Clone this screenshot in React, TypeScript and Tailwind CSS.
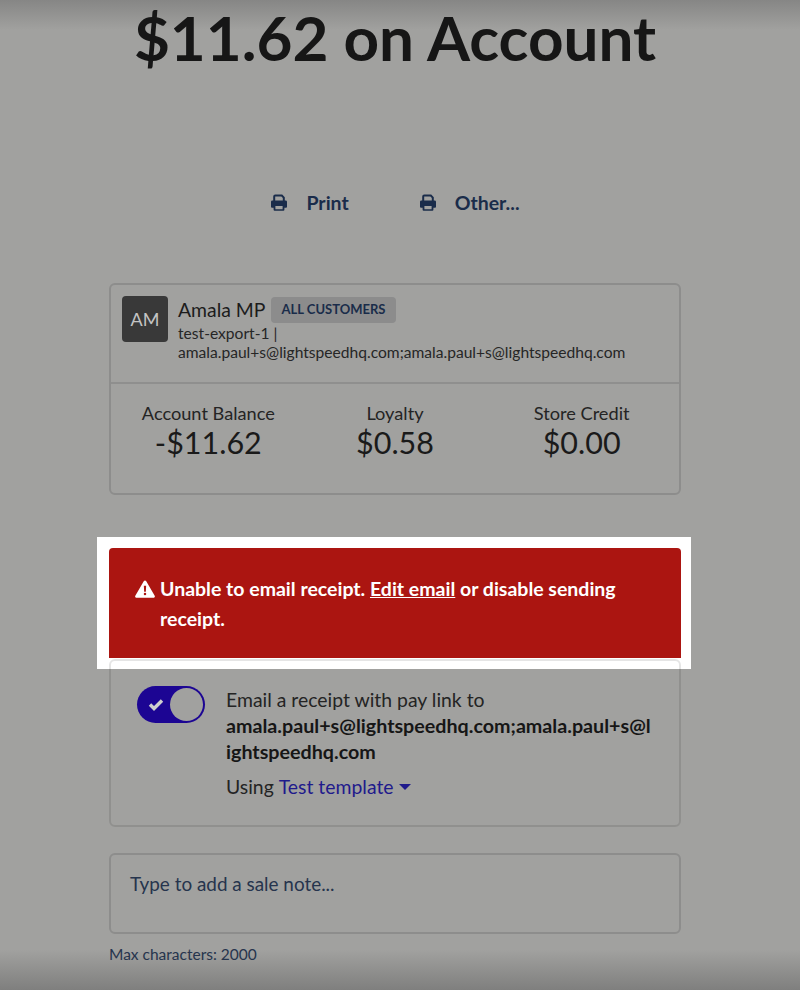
import React from 'react';

const PrinterIcon: React.FC = () => (
  <svg width="18" height="18" viewBox="0 0 18 18" fill="none" className="shrink-0">
    <path d="M4.2 7V2.6a1 1 0 0 1 1-1h6.6l2 2V7" stroke="#1a2c4a" strokeWidth="2" />
    <path fillRule="evenodd" clipRule="evenodd" d="M2.4 6.4h13.2a1.4 1.4 0 0 1 1.4 1.4v5a1 1 0 0 1-1 1h-1.6v2a1 1 0 0 1-1 1H4.6a1 1 0 0 1-1-1v-2H2a1 1 0 0 1-1-1v-5a1.4 1.4 0 0 1 1.4-1.4ZM5.4 12v3.2h7.2V12H5.4Z" fill="#1a2c4a" />
  </svg>
);

const WarningIcon: React.FC = () => (
  <svg width="20" height="18" viewBox="0 0 19 17" className="shrink-0">
    <path fillRule="evenodd" clipRule="evenodd" d="M9.5 0.5c.5 0 .9.3 1.2.7l8 13.7c.5.8-.1 1.8-1.1 1.8H1.4c-1 0-1.6-1-1.1-1.8l8-13.7c.3-.4.7-.7 1.2-.7ZM8.4 5.4l.3 5.6h1.6l.3-5.6H8.4Zm1.1 6.6a1.2 1.2 0 1 0 0 2.4 1.2 1.2 0 0 0 0-2.4Z" fill="#fff" />
  </svg>
);

const Stat: React.FC<{ label: string; value: string }> = ({ label, value }) => (
  <div className="flex flex-col items-center">
    <span className="text-[18.2px] leading-[21px] text-[#242424]">{label}</span>
    <span className="text-[30.5px] leading-[36px] text-[#1a1a1a]">{value}</span>
  </div>
);

export default function App() {
  return (
    <div className="w-[800px] h-[990px] overflow-hidden flex flex-col items-center pr-[10px] font-['Lato','Open_Sans',sans-serif] bg-[linear-gradient(to_bottom,#868685_0px,#a1a19f_30px,#a1a19f_950px,#7f7f7e_990px)]">
      <h1 className="mt-[1px] text-[62px] leading-[72px] font-bold text-[#161616] whitespace-nowrap">$11.62 on Account</h1>

      <div className="mt-[116px] flex gap-[70px] text-[19.5px] leading-[28px] font-bold text-[#1a2c4a]">
        <div className="flex items-center gap-[18px]">
          <PrinterIcon />
          <span>Print</span>
        </div>
        <div className="flex items-center gap-[18px]">
          <PrinterIcon />
          <span>Other...</span>
        </div>
      </div>

      <div className="mt-[66px] w-[572px] h-[212px] rounded-md border-2 border-[#8d8d8c] flex flex-col">
        <div className="h-[99px] border-b-2 border-[#8f8f8e] flex gap-[10px] pl-[11px] pt-[11px]">
          <div className="w-[46px] h-[46px] rounded bg-[#393939] flex items-center justify-center text-[18px] text-[#c4c4c4]">AM</div>
          <div className="flex flex-col">
            <div className="mt-[1px] flex items-center gap-[5px]">
              <span className="text-[19.4px] leading-[26px] text-[#1c1c1c]">Amala MP</span>
              <span className="h-[26px] px-[11px] rounded bg-[#8c8c8c] flex items-center text-[13px] font-bold text-[#1a2c4a]">ALL CUSTOMERS</span>
            </div>
            <span className="text-[15.6px] leading-[20px] text-[#262626]">test-export-1 |</span>
            <span className="text-[15.6px] leading-[19px] text-[#262626] whitespace-nowrap">amala.paul+s@lightspeedhq.com;amala.paul+s@lightspeedhq.com</span>
          </div>
        </div>
        <div className="grid grid-cols-3 px-[4px] pt-[19px]">
          <Stat label="Account Balance" value="-$11.62" />
          <Stat label="Loyalty" value="$0.58" />
          <Stat label="Store Credit" value="$0.00" />
        </div>
      </div>

      <div className="mt-[42px] mr-[2px] w-[594px] h-[132px] bg-white pl-[12px] pr-[10px] pt-[11px]">
        <div className="h-[110px] rounded-t bg-[#ab1511] flex gap-[5px] pl-[26px] pt-[26px] pr-[40px] text-[19.5px] leading-[29.5px] font-bold text-white">
          <div className="pt-[6px]"><WarningIcon /></div>
          <p>
            Unable to email receipt. <span className="underline">Edit email</span> or disable sending receipt.
          </p>
        </div>
      </div>

      <div className="-mt-[10px] w-[572px] h-[168px] rounded-md border-2 border-black/10 flex gap-[21px] pl-[26px] pt-[25px]">
        <div className="w-[68px] h-[37px] rounded-full bg-[#1c0593] relative shrink-0">
          <svg width="16" height="13" viewBox="0 0 16 13" className="absolute left-[11px] top-[12px]">
            <path d="M2 6.5 6 10.5 14 2.5" fill="none" stroke="#cfcfcf" strokeWidth="3.4" />
          </svg>
          <div className="absolute right-[2px] top-[2px] w-[33px] h-[33px] rounded-full bg-[#a1a19f]" />
        </div>
        <div className="flex flex-col w-[427px] pt-[1px]">
          <p className="text-[19.4px] leading-[26px] text-[#242424]">Email a receipt with pay link to</p>
          <p className="text-[19.7px] leading-[26px] font-bold text-[#161616] break-all">amala.paul+s@lightspeedhq.com;amala.paul+s@lightspeedhq.com</p>
          <p className="mt-[9px] text-[19.4px] leading-[26px] text-[#242424] flex items-center">
            Using&nbsp;<span className="text-[#1f1a8c]">Test template</span>
            <svg width="12" height="6" viewBox="0 0 12 6" className="ml-[5px]"><path d="M0 0h12L6 6Z" fill="#1f1a8c" /></svg>
          </p>
        </div>
      </div>

      <div className="mt-[26px] w-[572px] h-[81px] rounded-md border-2 border-[#8d8d8c] px-[19px] pt-[16px] text-[18.9px] leading-[26px] text-[#26344d]">
        Type to add a sale note...
      </div>
      <p className="mt-[10px] w-[572px] text-[15.5px] leading-[20px] text-[#26344d]">Max characters: 2000</p>
    </div>
  );
}
